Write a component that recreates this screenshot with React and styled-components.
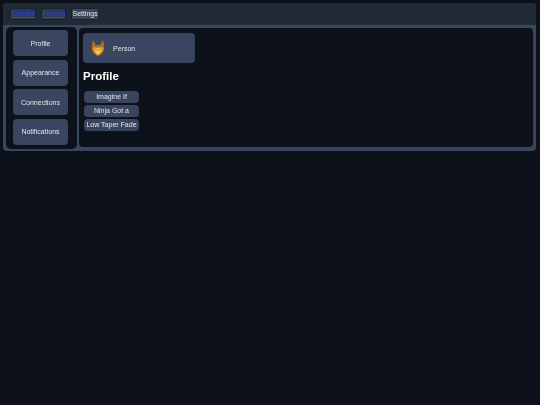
import React from "react"
import styled, { createGlobalStyle } from "styled-components"

const GlobalStyle = createGlobalStyle`
  html, body {
    margin: 0;
    height: 100%;
    background: #0d1119;
    font-family: "Liberation Sans", Arial, sans-serif;
  }
`

const Page = styled.div`
  padding: 3px 3px 0 3px;
  will-change: transform;
`

const Window = styled.div`
  width: 533px;
  border-radius: 4px;
  overflow: hidden;
  background: #3a4560;
`

const TopBar = styled.nav`
  height: 22px;
  background: #1f2a35;
  display: flex;
  align-items: center;
  gap: 5px;
  padding: 0 7px;
`

const Tab = styled.a`
  height: 10px;
  line-height: 10px;
  border: 1px solid #18222d;
  border-radius: 2px;
  background: ${(p) => (p.$active ? "#3a4656" : "#2b3850")};
  font-size: 7px;
  color: ${(p) => (p.$active ? "#e2e5e9" : "#3040f4")};
  text-decoration: ${(p) => (p.$active ? "none" : "underline")};
`

const Body = styled.div`
  display: flex;
  gap: 2px;
  padding: 3px 3px 4px 3px;
  height: 119px;
`

const Sidebar = styled.aside`
  width: 71px;
  flex: none;
  box-sizing: border-box;
  background: #0d1119;
  border-radius: 5px;
  display: flex;
  flex-direction: column;
  gap: 3.5px;
  padding: 3px 0 3px 7px;
  margin: -1px 0 -2px;
`

const SideButton = styled.button`
  width: 55px;
  height: 26px;
  border: 0;
  padding: 0;
  border-radius: 4px;
  background: #3a4560;
  color: #e2e5e9;
  font: 7px "Liberation Sans", Arial, sans-serif;
`

const Main = styled.main`
  flex: 1;
  background: #0d1119;
  border-radius: 4px;
  padding: 5px 4px;
  color: #fff;
`

const PersonCard = styled.div`
  width: 112px;
  height: 30px;
  border-radius: 4px;
  background: #3a4560;
  display: flex;
  align-items: center;
  gap: 8px;
  padding-left: 8px;
  box-sizing: border-box;
  font-size: 7px;
  color: #e2e5e9;
`

const Heading = styled.h2`
  margin: 6px 0 8px;
  font-size: 11.5px;
  line-height: 14px;
  font-weight: 700;
`

const Chips = styled.div`
  display: flex;
  flex-direction: column;
  gap: 2px;
  padding-left: 1px;
`

const Chip = styled.div`
  width: 55px;
  height: 12px;
  line-height: 12px;
  border-radius: 4px;
  background: #3a4560;
  text-align: center;
  font-size: 7px;
  color: #e2e5e9;
`

const Avatar = () => (
  <svg width="14" height="18" viewBox="0 0 14 18">
    <path d="M2 1 L5 6 L9 6 L12 1 Q14 6 13 11 Q11 16 7 17 Q3 16 1 11 Q0 6 2 1 Z" fill="#a96c22" />
    <path d="M1.5 9 Q5 7 7 9 Q9 7 12.5 9 Q12 14 7 16.5 Q2 14 1.5 9 Z" fill="#e8951f" />
    <path d="M4 10.5 L7 8.5 L10 10.5 Q9.5 14.5 7 15 Q4.5 14.5 4 10.5 Z" fill="#f6c95a" />
    <path d="M5.5 10.5 h1 v1 h-1 Z M7.5 10.5 h1 v1 h-1 Z" fill="#6b4520" />
  </svg>
)

export default function App() {
  const sections = ["Profile", "Appearance", "Connections", "Notifications"]
  const items = ["Imagine If", "Ninja Got a", "Low Taper Fade"]
  return (
    <Page>
      <GlobalStyle />
      <Window>
        <TopBar>
          <Tab href="#">Servers</Tab>
          <Tab href="#">Friends</Tab>
          <Tab $active>Settings</Tab>
        </TopBar>
        <Body>
          <Sidebar>
            {sections.map((s) => (
              <SideButton key={s}>{s}</SideButton>
            ))}
          </Sidebar>
          <Main>
            <PersonCard>
              <Avatar />
              Person
            </PersonCard>
            <Heading>Profile</Heading>
            <Chips>
              {items.map((i) => (
                <Chip key={i}>{i}</Chip>
              ))}
            </Chips>
          </Main>
        </Body>
      </Window>
    </Page>
  )
}
